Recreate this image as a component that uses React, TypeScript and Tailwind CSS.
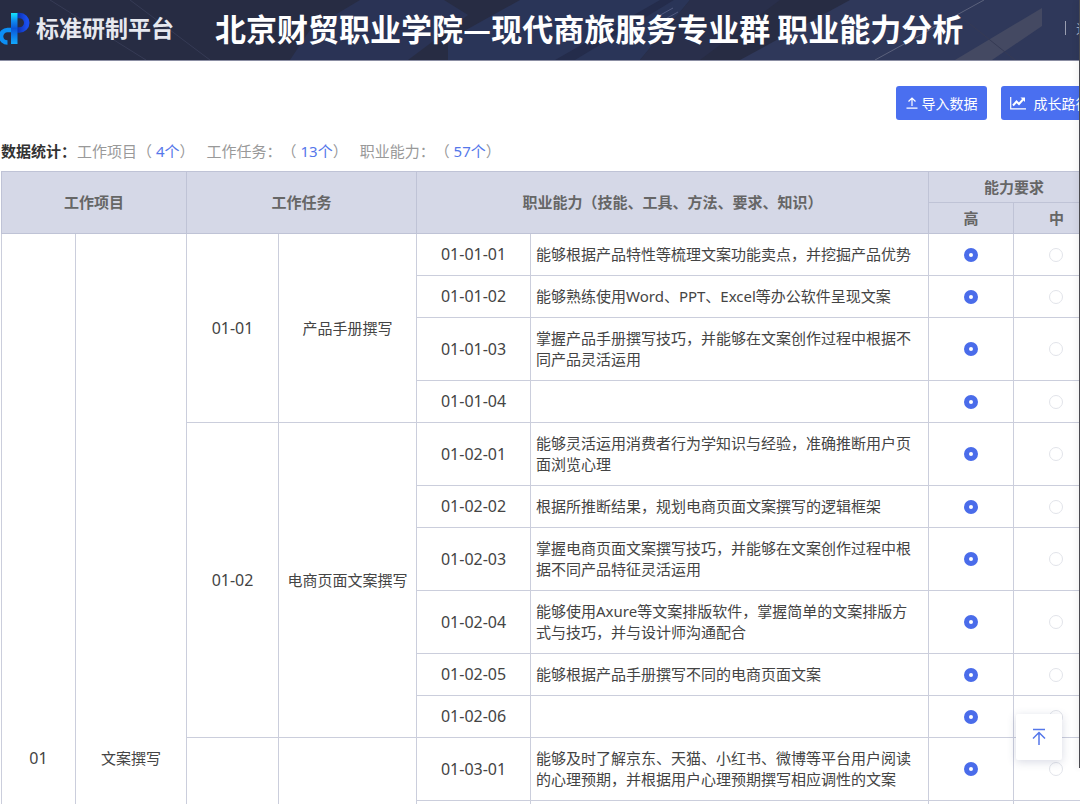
type Ability = { text: string }
type Task = { code: string, name: string, abilities: Ability[] }

const tasks: Task[] = [
  {
    code: "01-01",
    name: "产品手册撰写",
    abilities: [
      { text: "能够根据产品特性等梳理文案功能卖点，并挖掘产品优势" },
      { text: "能够熟练使用Word、PPT、Excel等办公软件呈现文案" },
      { text: "掌握产品手册撰写技巧，并能够在文案创作过程中根据不同产品灵活运用" },
      { text: "" }
    ]
  },
  {
    code: "01-02",
    name: "电商页面文案撰写",
    abilities: [
      { text: "能够灵活运用消费者行为学知识与经验，准确推断用户页面浏览心理" },
      { text: "根据所推断结果，规划电商页面文案撰写的逻辑框架" },
      { text: "掌握电商页面文案撰写技巧，并能够在文案创作过程中根据不同产品特征灵活运用" },
      { text: "能够使用Axure等文案排版软件，掌握简单的文案排版方式与技巧，并与设计师沟通配合" },
      { text: "能够根据产品手册撰写不同的电商页面文案" },
      { text: "" }
    ]
  },
  {
    code: "01-03",
    name: "平台文案撰写",
    abilities: [
      { text: "能够及时了解京东、天猫、小红书、微博等平台用户阅读的心理预期，并根据用户心理预期撰写相应调性的文案" },
      { text: "掌握平台文案撰写技巧，并能够在文案创作过程中根据不同平台灵活运用" },
      ...Array.from({ length: 10 }, () => ({ text: "" }))
    ]
  }
]

const totalRows = tasks.reduce((sum, task) => sum + task.abilities.length, 0)

const stats = [
  { label: "工作项目", count: 4 },
  { label: "工作任务：", count: 13 },
  { label: "职业能力：", count: 57 }
]

function Logo() {
  return (
    <svg width="30" height="34" viewBox="0 0 30 34" fill="none">
      <defs>
        <linearGradient id="stem" x1="0" y1="0" x2="0" y2="1">
          <stop offset="0" stopColor="#14e4fb" />
          <stop offset="0.25" stopColor="#0f8cf0" />
          <stop offset="0.5" stopColor="#0a55d8" />
          <stop offset="1" stopColor="#12a8fb" />
        </linearGradient>
        <linearGradient id="bowl" x1="0" y1="0" x2="1" y2="0">
          <stop offset="0" stopColor="#0c2ea8" />
          <stop offset="1" stopColor="#1a4ff0" />
        </linearGradient>
      </defs>
      <path d="M17 4.500h2.500a7 7 0 0 1 0 14.500H17" stroke="url(#bowl)" strokeWidth="5.500" />
      <path d="M11 19H7.500A6.500 6.500 0 0 0 1 25.500a6.500 6.500 0 0 0 6.500 6" stroke="#0c8ff5" strokeWidth="4.500" />
      <path d="M11 2h6.500v31H11z" fill="url(#stem)" />
    </svg>
  )
}

function HeaderBackdrop() {
  return (
    <svg
      className="absolute inset-0 h-full w-full"
      viewBox="0 0 1080 60"
      preserveAspectRatio="none"
      aria-hidden="true"
    >
      <path d="M310 30 360 0h84l24 15-60 45H290z" fill="#2a3355" />
      <path d="M448 40 520 0h170l-50 60H448z" fill="#2a3558" />
      <path d="M555 60 660 0h14L575 60z" fill="#242c4b" />
      <path d="M640 60 690 0h90l-80 60z" fill="#292f4b" />
      <path d="M740 60 850 0h230v60z" fill="#2f385a" />
      <path d="M955 60 1042 8v18l-50 34z" fill="#444962" />
      <path d="M875 60 984 0" stroke="#5c627c" strokeWidth="1" />
      <path d="M130 0l80 60M50 0l96 60M965 20l50 40" stroke="#363b55" strokeWidth="1" />
      <path d="M655 18l18-10M660 22l18-10" stroke="#525b80" strokeWidth="1" />
    </svg>
  )
}

function Header() {
  return (
    <header className="relative h-[61px] overflow-hidden border-b border-[#8b8ea3] bg-[#272c43] text-white">
      <HeaderBackdrop />
      <div className="relative flex h-full min-w-[1120px] items-center whitespace-nowrap pb-1">
        <div className="flex w-[215px] items-center gap-[6px]">
          <Logo />
          <span className="text-[23px] font-bold text-[#e6e8ef]">标准研制平台</span>
        </div>
        <h1 className="font-['Noto_Sans_CJK_SC',sans-serif] text-[31px] font-bold">
          北京财贸职业学院—现代商旅服务专业群 职业能力分析
        </h1>
        <div className="ml-auto flex items-center gap-[10px] text-[14px] text-[#a5a9b8]">
          <span className="h-[14px] w-px bg-[#9a9eb0]"></span>
          <a href="#">退出</a>
          <span className="w-[6px]"></span>
        </div>
      </div>
    </header>
  )
}

function Level({ name, label, defaultChecked }: { name: string, label: string, defaultChecked?: boolean }) {
  return (
    <input
      type="radio"
      name={name}
      aria-label={label}
      defaultChecked={defaultChecked}
      className="
        block
        mx-auto
        size-[14px]
        appearance-none
        rounded-full
        border
        border-[#e2e4ea]
        bg-white
        checked:border-[5px]
        checked:border-[#4a6cea]
      "
    />
  )
}

function AbilityTable() {
  const td = "border border-[#cbcedc] px-[5px] py-[10px] text-center"
  const th = "border border-[#bfc3d6] h-[31px] font-bold text-[#666]"

  return (
    <table className="ml-px w-full min-w-[1099px] table-fixed border-collapse text-[15px] leading-[21px] text-[#444]">
      <colgroup>
        <col className="w-[74px]" />
        <col className="w-[111px]" />
        <col className="w-[92px]" />
        <col className="w-[138px]" />
        <col className="w-[114px]" />
        <col />
        <col className="w-[85px]" />
        <col className="w-[86px]" />
      </colgroup>
      <thead className="bg-[#d5d8e7]">
        <tr>
          <th className={th} colSpan={2} rowSpan={2}>工作项目</th>
          <th className={th} colSpan={2} rowSpan={2}>工作任务</th>
          <th className={th} colSpan={2} rowSpan={2}>职业能力（技能、工具、方法、要求、知识）</th>
          <th className={th} colSpan={2}>能力要求</th>
        </tr>
        <tr>
          <th className={th}>高</th>
          <th className={th}>中</th>
        </tr>
      </thead>
      <tbody>
        {tasks.map((task, t) =>
          task.abilities.map((ability, i) => {
            const code = `${task.code}-${String(i + 1).padStart(2, "0")}`
            return (
              <tr key={code}>
                {t === 0 && i === 0 && (
                  <>
                    <td className={`${td} text-[16px]`} rowSpan={totalRows}>01</td>
                    <td className={td} rowSpan={totalRows}>文案撰写</td>
                  </>
                )}
                {i === 0 && (
                  <>
                    <td className={`${td} text-[16px]`} rowSpan={task.abilities.length}>{task.code}</td>
                    <td className={td} rowSpan={task.abilities.length}>{task.name}</td>
                  </>
                )}
                <td className={`${td} text-[16px]`}>{code}</td>
                <td className="border border-[#cbcedc] py-[10px] pr-[10px] pl-[5px]">{ability.text}</td>
                <td className={td}>
                  <Level name={code} label="高" defaultChecked />
                </td>
                <td className={td}>
                  <Level name={code} label="中" />
                </td>
              </tr>
            )
          })
        )}
      </tbody>
    </table>
  )
}

export default function App() {
  return (
    <div className="relative h-screen overflow-hidden bg-white font-['Noto_Sans','Noto_Sans_CJK_SC',sans-serif]">
      <Header />
      <main>
        <div className="flex min-w-[1098px] justify-end gap-[14px] pt-[25px] text-[14px] text-white">
          <button
            type="button"
            className="flex h-[34px] w-[91px] items-center justify-center gap-1 whitespace-nowrap rounded-[3px] bg-[#4a6ff0]"
          >
            <svg width="12" height="12" viewBox="0 0 12 12" fill="none" stroke="currentColor" strokeWidth="1.200">
              <path d="M6 9V1M2.500 4.500 6 1l3.500 3.500M.5 11.200h11" />
            </svg>
            导入数据
          </button>
          <button
            type="button"
            className="flex h-[34px] w-[97px] items-center justify-center gap-2 whitespace-nowrap rounded-[3px] bg-[#4a6ff0]"
          >
            <svg width="16" height="14" viewBox="0 0 16 14" fill="none" stroke="currentColor">
              <path d="M.7 1v11.800H16" strokeWidth="1.200" />
              <path d="M3 9.500l3.500-4 2.500 2.500 4-4.500" strokeWidth="2" />
              <path d="M10.500 1.500H15V6z" fill="currentColor" stroke="none" />
            </svg>
            成长路径
          </button>
        </div>

        <div className="flex gap-3 whitespace-nowrap px-px pt-[21px] pb-[9px] text-[15px] leading-[21px] text-[#999] [text-spacing-trim:space-all]">
          <div>
            <span className="mr-px font-bold text-[#333]">数据统计：</span>
            {stats[0].label}（ <span className="text-[#5577ea]">{stats[0].count}个</span>）
          </div>
          {stats.slice(1).map((stat) => (
            <div key={stat.label}>
              {stat.label}（ <span className="text-[#5577ea]">{stat.count}个</span>）
            </div>
          ))}
        </div>

        <AbilityTable />
      </main>

      <div className="absolute top-0 right-0 h-[768px] w-px bg-[#4a4a50] shadow-[0_0_6px_rgba(0,0,0,0.3)]"></div>

      <button
        type="button"
        aria-label="回到顶部"
        className="
          fixed
          right-[18px]
          bottom-11
          flex
          size-[46px]
          items-center
          justify-center
          rounded-[2px]
          bg-white
          text-[#5577ea]
          shadow-[0_2px_10px_rgba(60,70,120,0.2)]
        "
      >
        <svg width="16" height="18" viewBox="0 0 16 18" fill="none" stroke="currentColor" strokeWidth="1.500">
          <path d="M2 1.500h12M8 17V4.500M2 10.500l6-6 6 6" />
        </svg>
      </button>
    </div>
  )
}
